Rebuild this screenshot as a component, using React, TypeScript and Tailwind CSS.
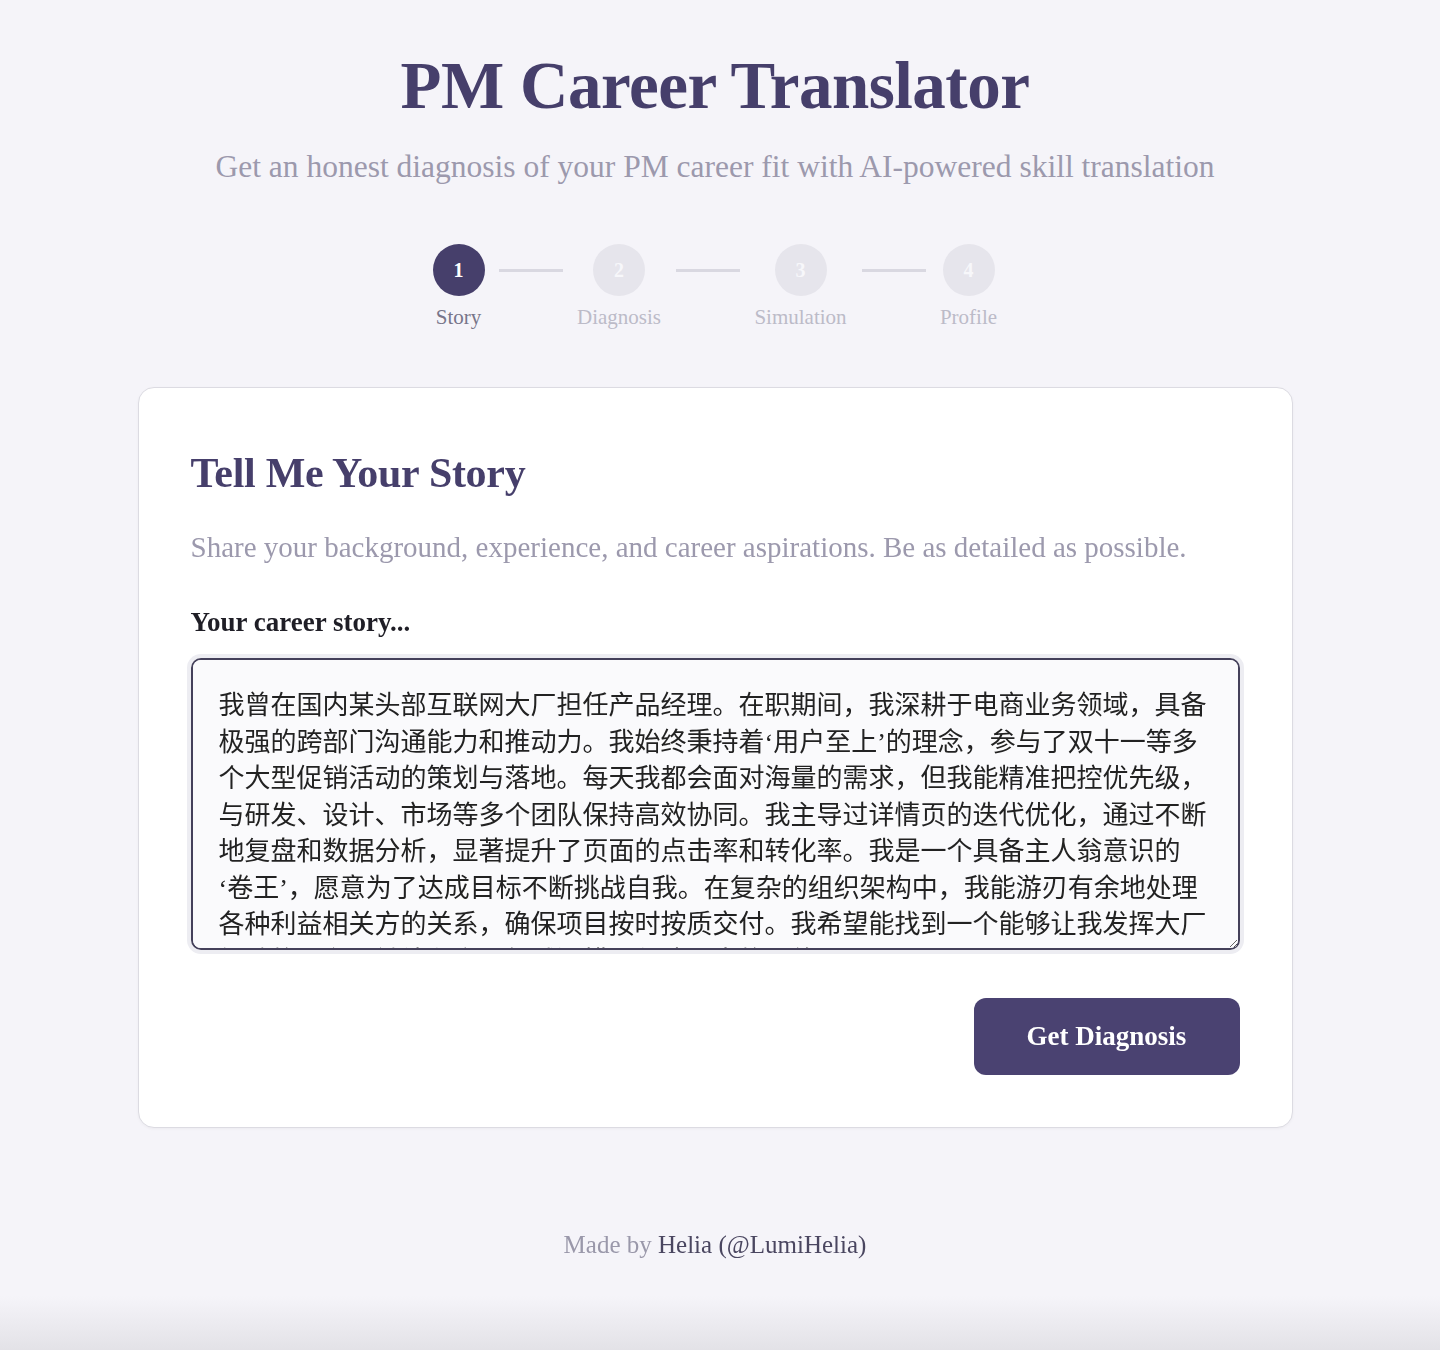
import { useState } from 'react';

const steps = [
    { n: 1, label: 'Story', width: 'w-[52px]' },
    { n: 2, label: 'Diagnosis', width: 'w-[85px]' },
    { n: 3, label: 'Simulation', width: 'w-[94px]' },
    { n: 4, label: 'Profile', width: 'w-[58px]' },
];

// zero-width spaces let the browser break before the opening quotes, like the original
const story =
    '我曾在国内某头部互联网大厂担任产品经理。在职期间，我深耕于电商业务领域，具备极强的跨部门沟通能力和推动力。我始终秉持着\u200B‘用户至上’的理念，参与了双十一等多个大型促销活动的策划与落地。每天我都会面对海量的需求，但我能精准把控优先级，与研发、设计、市场等多个团队保持高效协同。我主导过详情页的迭代优化，通过不断地复盘和数据分析，显著提升了页面的点击率和转化率。我是一个具备主人翁意识的\u200B‘卷王’，愿意为了达成目标不断挑战自我。在复杂的组织架构中，我能游刃有余地处理各种利益相关方的关系，确保项目按时按质交付。我希望能找到一个能够让我发挥大厂经验的平台，继续在产品领域深耕，创造更大的价值。';

const serif = 'font-["Liberation_Serif","Noto_Sans_CJK_SC",serif]';

function Stepper() {
    return (
        <div className="flex items-start justify-center mt-[56px]">
            {steps.map((s, i) => (
                <div key={s.n} className="flex items-start">
                    {i > 0 && <div className="w-[64px] h-[3px] bg-[#d9d8e1] mt-[25px] mx-[14px]" />}
                    <div className={`flex flex-col items-center ${s.width}`}>
                        <div
                            className={`w-[52px] h-[52px] rounded-full flex items-center justify-center text-[20px] font-bold ${
                                s.n === 1 ? 'bg-[#463f6b] text-white' : 'bg-[#e6e5ec] text-[#f7f7fa]'
                            }`}
                        >
                            {s.n}
                        </div>
                        <span
                            className={`mt-[7px] text-[21px] leading-[28px] whitespace-nowrap ${
                                s.n === 1 ? 'text-[#77758a]' : 'text-[#bcbbc8]'
                            }`}
                        >
                            {s.label}
                        </span>
                    </div>
                </div>
            ))}
        </div>
    );
}

export default function App() {
    const [text, setText] = useState(story);

    return (
        <div
            className={`min-h-[1350px] bg-[linear-gradient(to_bottom,#f5f4f9_0%,#f5f4f9_96%,#e3e2e7_100%)] flex flex-col items-center pt-[47px] pb-[60px] pr-[10px] ${serif}`}
        >
            <h1 className="text-[67px] leading-[77px] font-bold text-[#463f6b] tracking-[-0.5px]">
                PM Career Translator
            </h1>
            <p className="mt-[22px] text-[31.5px] leading-[42px] text-[#9c99ad]">
                Get an honest diagnosis of your PM career fit with AI-powered skill translation
            </p>

            <Stepper />

            <div className="mt-[56px] w-[1155px] bg-white border border-[#dcdbe2] rounded-[16px] shadow-[0_1px_3px_rgba(0,0,0,0.04)] px-[52px] pt-[61px] pb-[52px]">
                <h2 className="text-[42px] leading-[48px] font-bold text-[#463f6b] tracking-[-0.3px]">
                    Tell Me Your Story
                </h2>
                <p className="mt-[32px] text-[29px] leading-[36px] text-[#9c99ad]">
                    Share your background, experience, and career aspirations. Be as detailed as possible.
                </p>
                <label className="block mt-[39px] text-[27px] leading-[36px] font-bold text-[#1f1e26]">
                    Your career story...
                </label>
                <textarea
                    value={text}
                    onChange={(e) => setText(e.target.value)}
                    className={`block mt-[18px] w-full h-[292px] border-2 border-[#44405a] rounded-[10px] bg-[#fafafc] shadow-[0_0_0_4px_#ededf2] px-[26px] pt-[28px] pb-[10px] text-[26px] leading-[36.5px] text-[#222] outline-none ${serif}`}
                />
                <div className="flex justify-end mt-[48px]">
                    <button className="w-[266px] h-[77px] rounded-[12px] bg-[#4a4271] text-white text-[27px] font-bold">
                        Get Diagnosis
                    </button>
                </div>
            </div>

            <footer className="mt-[100px] text-[25px] leading-[33px] text-[#9a98aa]">
                Made by <span className="text-[#4a4660]">Helia (@LumiHelia)</span>
            </footer>
        </div>
    );
}
